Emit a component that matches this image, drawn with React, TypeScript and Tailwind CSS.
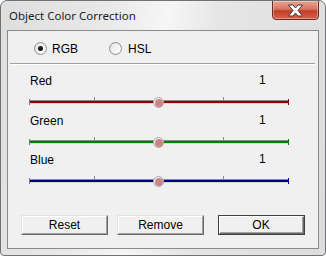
import React from "react";

function Radio({ checked }: { checked: boolean }) {
  return (
    <div className="w-[13px] h-[13px] rounded-full border border-[#8e8f8f] bg-[linear-gradient(135deg,#dcdcdc,#ffffff)] flex items-center justify-center shrink-0">
      <div className="w-[9px] h-[9px] rounded-full bg-[linear-gradient(135deg,#e6e6e6,#ffffff)] flex items-center justify-center">
        {checked && <div className="w-[5px] h-[5px] rounded-full bg-[#1a1a1a]" />}
      </div>
    </div>
  );
}

function Slider({ color }: { color: string }) {
  return (
    <div className="relative w-[260px] h-[12px] ml-[21px]">
      {/* track */}
      <div className="absolute left-0 right-0 top-[4px] h-[4px] border-t border-[#8a8a8a] border-b border-b-[#d8d8d8]" style={{ backgroundColor: color }} />
      {/* end marks */}
      <div className="absolute left-0 top-[3px] w-[1px] h-[6px] bg-[#7a7a7a]" />
      <div className="absolute right-0 top-[3px] w-[1px] h-[6px]" style={{ backgroundColor: color }} />
      {/* ticks */}
      <div className="absolute left-[65px] top-[1px] w-[1px] h-[3px] bg-[#8a8a8a]" />
      <div className="absolute left-[194px] top-[1px] w-[1px] h-[3px] bg-[#8a8a8a]" />
      {/* thumb */}
      <div className="absolute left-[124px] top-[1px] w-[11px] h-[11px] rounded-full border border-[#a8a8a8] bg-[#f4f4f4] flex items-center justify-center">
        <div className="w-[8px] h-[8px] rounded-full bg-[#c98686]" />
      </div>
    </div>
  );
}

function SliderBlock({ label, color, h }: { label: string; color: string; h: string }) {
  return (
    <div className={"flex flex-col " + h}>
      <div className="flex h-[14px] items-center text-[12px] leading-[14px]">
        <span className="ml-[22px] w-[229px]">{label}</span>
        <span className="-mt-[3px]">1</span>
      </div>
      <div className="mt-[8px]">
        <Slider color={color} />
      </div>
    </div>
  );
}

function Button({ label, isDefault }: { label: string; isDefault?: boolean }) {
  return (
    <div
      className={
        "w-[87px] h-[20px] border " +
        (isDefault
          ? "border-[#404040]"
          : "border-t-[#e3e3e3] border-l-[#e3e3e3] border-r-[#696969] border-b-[#696969]")
      }
    >
      {isDefault ? (
        <div className="w-full h-full border border-t-white border-l-white border-r-[#696969] border-b-[#696969] flex">
          <div className="flex-1 bg-[#f0f0f0] flex items-center justify-center text-[12px] border-r border-b border-[#a0a0a0]">{label}</div>
        </div>
      ) : (
        <div className="w-full h-full border border-t-white border-l-white border-r-[#a0a0a0] border-b-[#a0a0a0] bg-[#f0f0f0] flex items-center justify-center text-[12px]">
          {label}
        </div>
      )}
    </div>
  );
}

export default function App() {
  return (
    <div className="w-[326px] h-[256px] bg-white" style={{ fontFamily: '"Liberation Sans", Arial, sans-serif' }}>
      <div className="w-[326px] h-[256px] border border-[#6f7377] rounded-t-[7px] rounded-b-[4px] bg-[linear-gradient(100deg,#dedede_0%,#e9e9e9_30%,#f6f6f6_46%,#e6e6e6_60%,#dcdcdc_100%)] flex flex-col overflow-hidden">
        {/* title bar */}
        <div className="relative h-[29px] shrink-0">
          <div className="absolute left-[8px] top-[7px] text-[11.5px] leading-[16px] text-[#1b1b1b]" style={{ fontFamily: '"Noto Sans", "Open Sans", sans-serif' }}>
            Object Color Correction
          </div>
          <div className="absolute left-[271px] top-[-1px] w-[47px] h-[20px] rounded-b-[4px] border border-[#6b2a20] bg-[linear-gradient(180deg,#e8a595_0%,#d9745f_45%,#c33e26_55%,#d4634a_100%)] flex items-center justify-center shadow-[inset_0_0_0_1px_rgba(255,255,255,0.35)]">
            <svg width="17" height="13" viewBox="0 0 17 13">
              <path
                d="M1.5 1 H6 L8.5 4 L11 1 H15.5 L11 6.5 L15.5 12 H11 L8.5 9 L6 12 H1.5 L6 6.5 Z"
                fill="#ffffff"
                stroke="#4a3a3a"
                strokeWidth="1"
                strokeLinejoin="round"
              />
            </svg>
          </div>
        </div>
        {/* client */}
        <div className="mx-[6px] h-[219px] border border-[#8a8a8a] bg-[#f0f0f0] flex flex-col text-black">
          <div className="mt-[10px] h-[15px] flex items-center text-[12px]">
            <div className="ml-[26px]"><Radio checked /></div>
            <span className="ml-[5px]">RGB</span>
            <div className="ml-[31px]"><Radio checked={false} /></div>
            <span className="ml-[6px]">HSL</span>
          </div>
          <div className="mt-[7px] ml-[2px] w-[305px] h-[2px] border-t border-[#a0a0a0] border-b border-b-white" />
          <div className="mt-[9px] flex flex-col">
            <SliderBlock label="Red" color="#900000" h="h-[40px]" />
            <SliderBlock label="Green" color="#008000" h="h-[39px]" />
            <SliderBlock label="Blue" color="#000090" h="h-[39px]" />
          </div>
          <div className="mt-[23px] flex">
            <div className="ml-[13px]"><Button label="Reset" /></div>
            <div className="ml-[9px]"><Button label="Remove" /></div>
            <div className="ml-[14px]"><Button label="OK" isDefault /></div>
          </div>
        </div>
      </div>
    </div>
  );
}
